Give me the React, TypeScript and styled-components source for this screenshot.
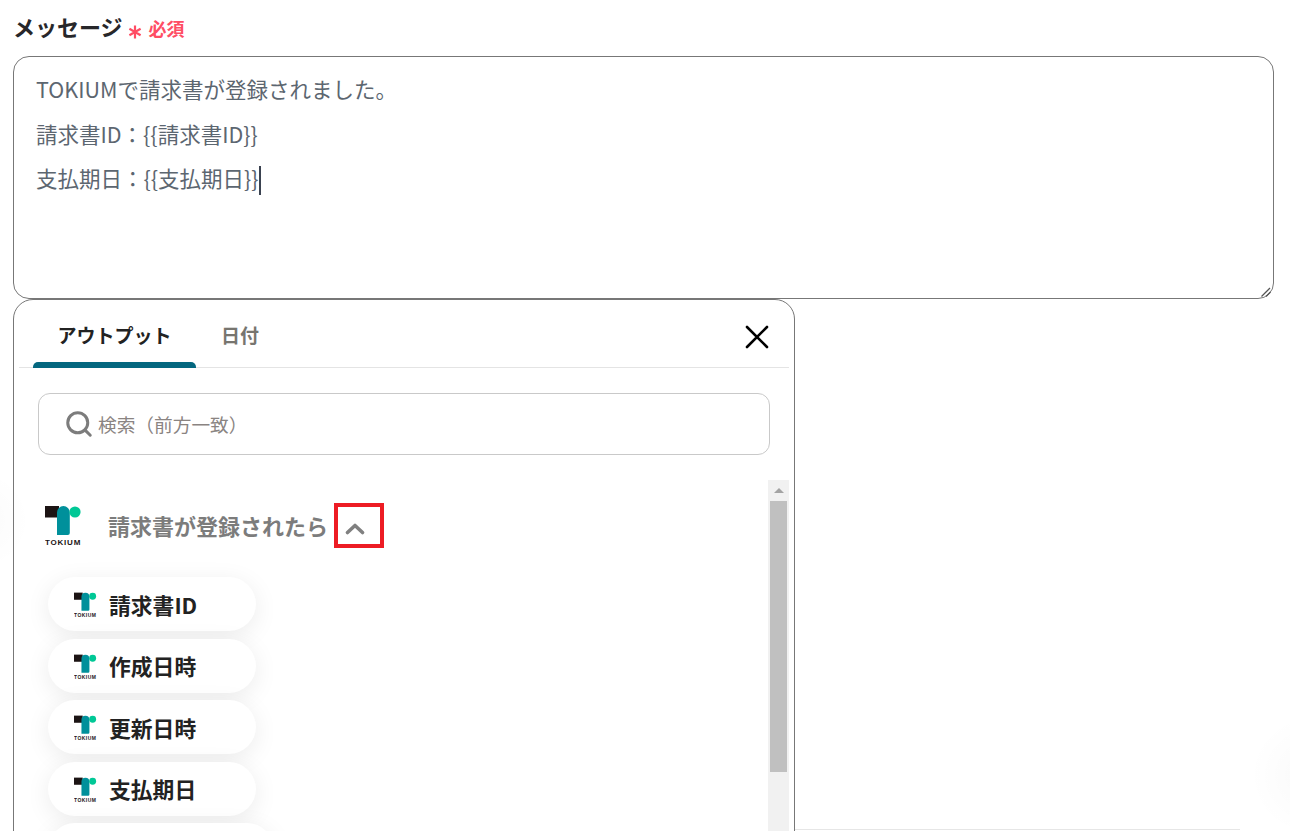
import React from "react";
import styled, { createGlobalStyle } from "styled-components";
import { Search } from "lucide-react";

const Global = createGlobalStyle`
  html, body {
    margin: 0;
    padding: 0;
    background: #fff;
    overflow: hidden;
  }
  body {
    font-family: "Noto Sans CJK JP", "Noto Sans", sans-serif;
  }
`;

const Page = styled.div`
  height: 831px;
  overflow: hidden;
  padding: 0 16px 0 13px;
  box-sizing: border-box;
  background:
    radial-gradient(circle at 1310px 775px, rgba(0, 0, 0, 0.025), transparent 60px),
    radial-gradient(circle at -20px 520px, rgba(0, 0, 0, 0.02), transparent 50px);
`;

const LabelRow = styled.div`
  display: flex;
  align-items: flex-end;
  height: 56px;
  padding-bottom: 14px;
  box-sizing: border-box;
`;

const Label = styled.span`
  font-size: 22px;
  font-weight: 700;
  line-height: 32px;
  color: #27272a;
`;

const Required = styled.span`
  display: flex;
  align-items: center;
  margin-left: 5px;
  font-size: 18px;
  font-weight: 700;
  line-height: 26px;
  color: #ff4d64;
  transform: translateY(-1px);
`;

const Star = styled.svg`
  margin-right: 7px;
  transform: translateY(4px);
`;

const MessageBox = styled.div`
  position: relative;
  height: 243px;
  box-sizing: border-box;
  border: 1px solid #777;
  border-radius: 16px;
  padding: 10px 22px;
  font-size: 21.5px;
  color: #5c6670;
`;

const Line = styled.div`
  height: 44.5px;
  line-height: 44px;
  white-space: nowrap;
`;

const Caret = styled.span`
  display: inline-block;
  width: 2px;
  height: 29px;
  margin-left: 0;
  background: #3a4250;
  vertical-align: -8px;
`;

const Grip = styled.svg`
  position: absolute;
  right: 1px;
  bottom: 0;
`;

const LowerRow = styled.div`
  display: flex;
  align-items: flex-start;
`;

const Panel = styled.div`
  flex: none;
  width: 782px;
  height: 600px;
  box-sizing: border-box;
  border: 1px solid #777;
  border-radius: 20px 20px 0 0;
  padding: 0 5px;
`;

const SideEdge = styled.div`
  width: 445px;
  height: 531px;
  box-sizing: border-box;
  border-bottom: 1px solid #e6e6e6;
`;

const TabBar = styled.div`
  display: flex;
  align-items: stretch;
  height: 68px;
  padding-left: 14px;
  border-bottom: 1px solid #e4e4e4;
  box-sizing: border-box;
`;

const Tab = styled.div<{ $active?: boolean }>`
  position: relative;
  width: ${(p) => (p.$active ? "163px" : "auto")};
  margin-left: ${(p) => (p.$active ? "0" : "25px")};
  padding-top: 20px;
  text-align: center;
  font-size: 19px;
  font-weight: 700;
  line-height: 30px;
  color: ${(p) => (p.$active ? "#222" : "#77756f")};
  &::after {
    content: "";
    display: ${(p) => (p.$active ? "block" : "none")};
    position: absolute;
    left: 0;
    right: 0;
    bottom: -1px;
    height: 6px;
    border-radius: 5px 5px 0 0;
    background: #04677f;
  }
`;

const CloseIcon = styled.svg`
  margin: 25px 20px 0 auto;
`;

const SearchWrap = styled.div`
  padding: 25px 19px 25px 19px;
`;

const SearchBox = styled.div`
  display: flex;
  align-items: center;
  height: 62px;
  box-sizing: border-box;
  border: 1px solid #c9c9c9;
  border-radius: 12px;
  padding-left: 25px;
  padding-bottom: 1px;
  font-size: 18.7px;
  color: #8a8482;
`;

const SearchIcon = styled(Search)`
  color: #7c7c7c;
  margin-right: 4px;
`;

const ListArea = styled.div`
  display: flex;
  justify-content: space-between;
`;

const ListBody = styled.div`
  padding: 0 0 0 26px;
`;

const TriggerRow = styled.div`
  display: flex;
  align-items: center;
  height: 97px;
  padding-bottom: 6px;
  box-sizing: border-box;
`;

const TriggerTitle = styled.span`
  margin-left: 26px;
  font-size: 22px;
  font-weight: 700;
  color: #7c7c7c;
  line-height: 30px;
  transform: translateY(-1px);
`;

const ToggleBox = styled.div`
  display: flex;
  align-items: center;
  justify-content: center;
  width: 50px;
  height: 45px;
  margin-left: 6px;
  padding: 6px 8px 0 0;
  box-sizing: border-box;
  border: 4px solid #ed1c24;
  color: #808080;
`;

const Pills = styled.div`
  display: flex;
  flex-direction: column;
  align-items: flex-start;
  gap: 7.6px;
`;

const Pill = styled.div`
  display: flex;
  align-items: center;
  width: 208px;
  height: 54px;
  box-sizing: border-box;
  margin-left: 3px;
  padding-left: 26px;
  border-radius: 27px;
  background: #fff;
  box-shadow: 0 5px 24px rgba(0, 0, 0, 0.08);
  font-size: 21.8px;
  font-weight: 700;
  color: #222;

  svg {
    transform: translateY(1px);
  }
`;

const PillLabel = styled.span`
  margin-left: 12px;
`;

const WidePill = styled(Pill)`
  width: 226px;
`;

const Scrollbar = styled.div`
  flex: none;
  width: 21px;
  height: 360px;
  box-sizing: border-box;
  padding: 0 2px;
  background: #f1f1f1;
`;

const ArrowZone = styled.div`
  display: flex;
  justify-content: center;
  align-items: center;
  height: 21px;
`;

const Arrow = styled.div`
  width: 0;
  height: 0;
  border-left: 5px solid transparent;
  border-right: 5px solid transparent;
  border-bottom: 5px solid #a3a3a3;
`;

const Thumb = styled.div`
  height: 271px;
  background: #c0c0c0;
`;

const LogoSvg = styled.svg`
  flex: none;
`;

const LogoMark = ({ width }: { width: number }) => (
  <LogoSvg width={width} height={(width * 42) / 37} viewBox="0 0 37 42">
    <rect x="0" y="1" width="14" height="11.5" fill="#1c1414" />
    <path d="M12 7.5a6.4 6.4 0 0 1 12.8 0V28a2 2 0 0 1-2 2H12z" fill="#00909b" />
    <circle cx="30" cy="7" r="5.6" fill="#00c896" />
    <text x="18" y="40" textAnchor="middle" fontSize="8" fontWeight="700" letterSpacing="0.8" fontFamily="'Liberation Sans', sans-serif" fill="#1c1414">
      TOKIUM
    </text>
  </LogoSvg>
);

const outputs = ["請求書ID", "作成日時", "更新日時", "支払期日"];

export default function App() {
  return (
    <Page>
      <Global />
      <LabelRow>
        <Label>メッセージ</Label>
        <Required>
          <Star width="14" height="14" viewBox="0 0 14 14">
            <path d="M7 0.5V13.5M1.4 3.8 12.6 10.2M12.6 3.8 1.4 10.2" stroke="#ff4d64" strokeWidth="2.2" fill="none" />
          </Star>
          必須
        </Required>
      </LabelRow>
      <MessageBox>
        <Line>TOKIUMで請求書が登録されました。</Line>
        <Line>請求書ID：{"{{"}請求書ID{"}}"}</Line>
        <Line>
          支払期日：{"{{"}支払期日{"}}"}
          <Caret />
        </Line>
        <Grip width="12" height="12" viewBox="0 0 12 12">
          <path d="M1.5 10.5 10 2M6 10.5 10.5 6" stroke="#555" strokeWidth="1.3" fill="none" />
        </Grip>
      </MessageBox>
      <LowerRow>
        <Panel>
          <TabBar>
            <Tab $active>アウトプット</Tab>
            <Tab>日付</Tab>
            <CloseIcon width="24" height="24" viewBox="0 0 24 24">
              <path d="M2 2 22 22M22 2 2 22" stroke="#000" strokeWidth="2.6" strokeLinecap="round" fill="none" />
            </CloseIcon>
          </TabBar>
          <SearchWrap>
            <SearchBox>
              <SearchIcon size={30} strokeWidth={2.4} />
              検索（前方一致）
            </SearchBox>
          </SearchWrap>
          <ListArea>
            <ListBody>
              <TriggerRow>
                <LogoMark width={37} />
                <TriggerTitle>請求書が登録されたら</TriggerTitle>
                <ToggleBox>
                  <svg width="20" height="13" viewBox="0 0 20 13">
                    <path d="M2.5 10.5 10 3.5 17.5 10.5" stroke="currentColor" strokeWidth="3.6" fill="none" strokeLinecap="round" strokeLinejoin="round" />
                  </svg>
                </ToggleBox>
              </TriggerRow>
              <Pills>
                {outputs.map((name) => (
                  <Pill key={name}>
                    <LogoMark width={23} />
                    <PillLabel>{name}</PillLabel>
                  </Pill>
                ))}
                <WidePill />
              </Pills>
            </ListBody>
            <Scrollbar>
              <ArrowZone>
                <Arrow />
              </ArrowZone>
              <Thumb />
            </Scrollbar>
          </ListArea>
        </Panel>
        <SideEdge />
      </LowerRow>
    </Page>
  );
}
